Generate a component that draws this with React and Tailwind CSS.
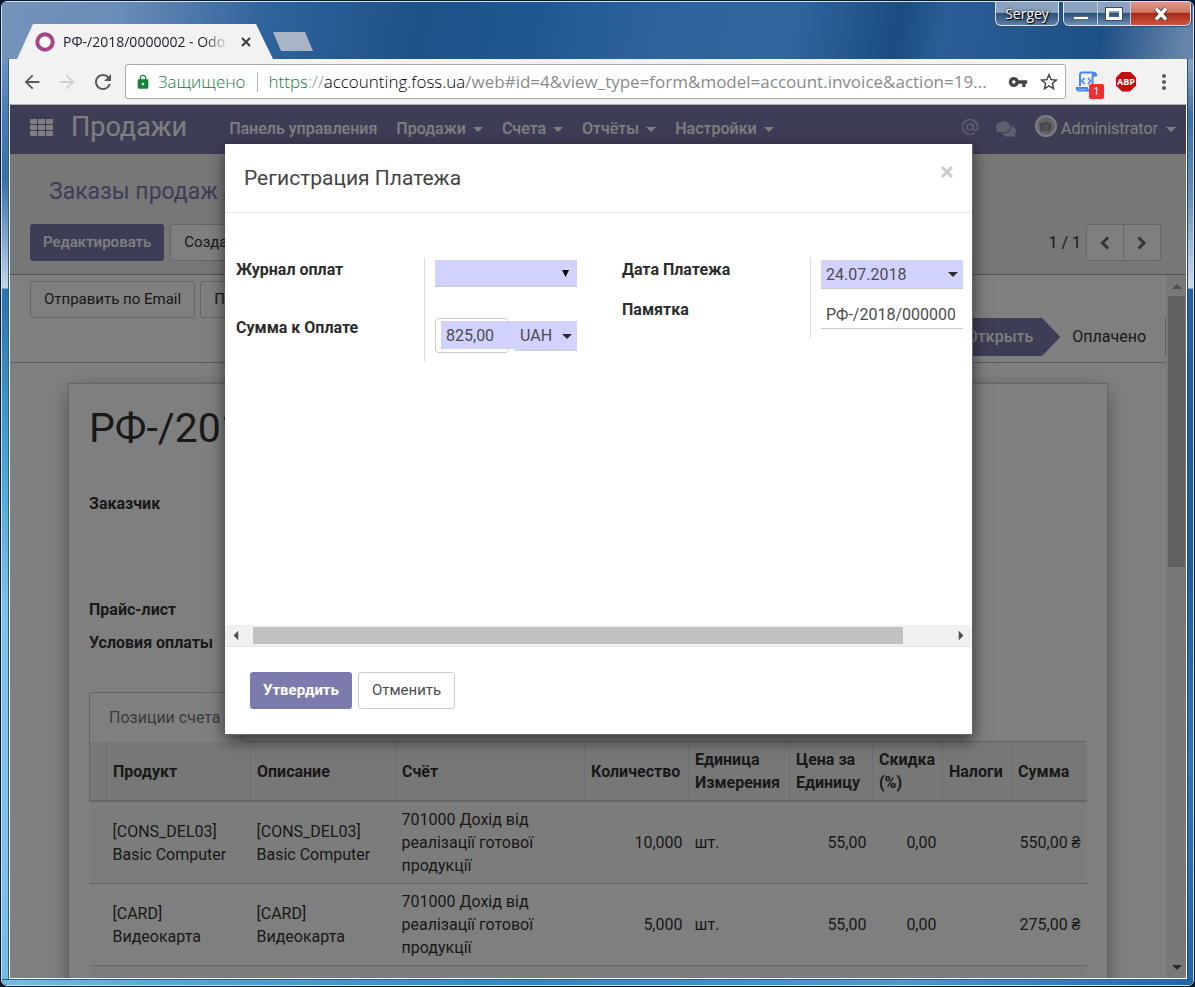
import React, { useState } from 'react';
import { MdArrowBack, MdArrowForward, MdRefresh, MdLock, MdVpnKey, MdStarBorder, MdMoreVert } from 'react-icons/md';
import { FaComments, FaCamera } from 'react-icons/fa';
import { AtSign } from 'lucide-react';

const menuItems = [
  { label: 'Панель управления', dropdown: false },
  { label: 'Продажи', dropdown: true },
  { label: 'Счета', dropdown: true },
  { label: 'Отчёты', dropdown: true },
  { label: 'Настройки', dropdown: true },
];

const invoiceLines = [
  {
    code: '[CONS_DEL03]',
    name: 'Basic Computer',
    account: '701000 Дохід від реалізації готової продукції',
    qty: '10,000',
    unit: 'шт.',
    price: '55,00',
    discount: '0,00',
    total: '550,00 ₴',
  },
  {
    code: '[CARD]',
    name: 'Видеокарта',
    account: '701000 Дохід від реалізації готової продукції',
    qty: '5,000',
    unit: 'шт.',
    price: '55,00',
    discount: '0,00',
    total: '275,00 ₴',
  },
];

function Caret({ className = '' }) {
  return (
    <svg viewBox="0 0 10 5" className={`h-[5px] w-[10px] fill-current ${className}`} aria-hidden="true">
      <path d="M0 0h10L5 5z" />
    </svg>
  );
}

function Chevron({ right }) {
  return (
    <svg viewBox="0 0 12 14" className="h-[14px] w-3" fill="none" stroke="currentColor" strokeWidth="3" aria-hidden="true">
      <path d={right ? 'M2.5 1.5 8 7l-5.5 5.5' : 'M9 1.5 3.5 7 9 12.5'} />
    </svg>
  );
}

function TitleBar() {
  return (
    <header className="flex h-[57px] shrink-0 items-end justify-between bg-[linear-gradient(100deg,#7593bb_0%,#6a8cb8_10%,#2f639c_22%,#1d5288_35%,#1e5790_44%,#2d639c_55%,#2f669e_66%,#1a4c81_75%,#2a5e96_79%,#1c4f86_92%,#6684aa_99%)] pl-[15px]">
      <div className="flex items-end">
        <div className="flex h-[35px] w-64 items-center gap-2 bg-[#f2f2f2] pl-[18px] [clip-path:polygon(16px_0,239px_0,100%_100%,0_100%)]">
          <svg viewBox="0 0 20 20" className="size-5 shrink-0" aria-hidden="true">
            <circle cx="10" cy="10" r="7.7" fill="#fff" stroke="#a24689" strokeWidth="4" />
          </svg>
          <span className="w-[167px] whitespace-nowrap font-['Open_Sans',sans-serif] text-sm text-[#1b1b2b] [mask-image:linear-gradient(to_right,#000_84%,transparent)]">
            РФ-/2018/0000002 - Odo
          </span>
          <button aria-label="Закрыть вкладку" className="flex size-4 items-center justify-center">
            <svg viewBox="0 0 10 10" className="size-[10px]" stroke="#3c3c3c" strokeWidth="2" aria-hidden="true">
              <path d="M1 1l8 8M9 1 1 9" />
            </svg>
          </button>
        </div>
        <button aria-label="Новая вкладка" className="mb-2 h-[19px] w-10 bg-[#a9b5c5] [clip-path:polygon(0_0,32px_0,100%_100%,8px_100%)]" />
      </div>
      <div className="flex h-6 gap-1 self-start pr-[2px]">
        <button className="h-6 w-16 rounded-b-md border border-t-0 border-[#dfe6ee] bg-[linear-gradient(#8ba3c0_45%,#2d5279_50%,#5b7ea6)] font-['Open_Sans',sans-serif] text-sm leading-6 text-white shadow-[0_0_0_1px_#2d4a6b] [text-shadow:0_0_3px_#000,1px_1px_1px_#000]">
          Sergey
        </button>
        <div className="flex h-6 overflow-hidden rounded-b-md border border-t-0 border-[#dfe6ee] shadow-[0_0_0_1px_#2d4a6b]">
          <button aria-label="Свернуть" className="flex w-[34px] items-center justify-center border-r border-[#c3cedb] bg-[linear-gradient(#8ba3c0_45%,#2d5279_50%,#6d8fb5)]">
            <svg viewBox="0 0 16 4" className="mt-2 h-1 w-4" aria-hidden="true">
              <rect x=".5" y=".5" width="15" height="3" fill="#fff" stroke="#3c4a5a" strokeWidth=".7" />
            </svg>
          </button>
          <button aria-label="Развернуть" className="flex w-[33px] items-center justify-center border-r border-[#c3cedb] bg-[linear-gradient(#8ba3c0_45%,#2d5279_50%,#6d8fb5)]">
            <svg viewBox="0 0 18 14" className="h-[14px] w-[18px]" fill="none" aria-hidden="true">
              <rect x="2" y="2" width="14" height="10" stroke="#3c4a5a" strokeWidth="4" />
              <rect x="2.5" y="2.5" width="13" height="9" stroke="#fff" strokeWidth="3" />
            </svg>
          </button>
          <button aria-label="Закрыть" className="flex w-[59px] items-center justify-center bg-[linear-gradient(#dc9a8c_0%,#cf7361_45%,#a92a17_50%,#c9543f)]">
            <svg viewBox="0 0 16 14" className="h-[14px] w-4" aria-hidden="true">
              <path d="M3 1.5 13 12.5M13 1.5 3 12.5" stroke="#4a2a2a" strokeWidth="5" />
              <path d="M3 1.5 13 12.5M13 1.5 3 12.5" stroke="#fff" strokeWidth="3.4" />
            </svg>
          </button>
        </div>
      </div>
    </header>
  );
}

function BrowserToolbar() {
  return (
    <div className="flex h-[46px] shrink-0 items-center border-b border-[#b0aeb2] bg-[#f2f2f2] pr-[10px] pl-[11px] text-[#5a5a5a]">
      <div className="flex items-center gap-[13px]">
        <button aria-label="Назад"><MdArrowBack size={22} /></button>
        <button aria-label="Вперёд" className="text-[#d0d0d0]"><MdArrowForward size={22} /></button>
        <button aria-label="Обновить"><MdRefresh size={24} /></button>
      </div>
      <div className="ml-[10px] flex h-[35px] min-w-0 flex-1 items-center rounded-[3px] border border-[#a9a9a9] bg-white pr-[5px] pl-[9px] font-['Open_Sans',sans-serif] text-[17px] font-light">
        <MdLock size={16} className="shrink-0 text-[#168039]" />
        <span className="ml-[7px] text-[#168039]">Защищено</span>
        <span className="mx-[11px] h-5 w-px shrink-0 bg-[#b5b5b5]" />
        <span className="min-w-0 flex-1 whitespace-nowrap text-[#8a8a8a]">
          <span className="text-[#168039]">https</span>://<span className="text-black">accounting.foss.ua</span>
          <span className="font-normal">/web#id=4&amp;view_type=form&amp;model=account.invoice&amp;action=19...</span>
        </span>
        <button aria-label="Пароли" className="ml-3"><MdVpnKey size={20} className="text-[#444]" /></button>
        <button aria-label="В закладки" className="ml-[10px]"><MdStarBorder size={22} className="text-[#444]" /></button>
      </div>
      <button aria-label="Скрипты" className="relative ml-[10px] h-7 w-7">
        <svg viewBox="0 0 22 22" className="size-[22px]" fill="none" stroke="#4285f4" strokeWidth="2" aria-hidden="true">
          <path d="M4 15V4c0-2 1-2.500 2-2.500h12" />
          <path d="M16.500 5v12c0 1.500-1 2.500-2.500 2.500H3c-1.500 0-2-1-2-2.500h10c0 1.500 1 2.500 2 2.500" />
          <path d="M16.500 5V3c0-2 4-2 4 0v2z" fill="#4285f4" strokeWidth="1" />
          <path d="M8.500 7 6 10l2.500 3M12 7l2.500 3-2.500 3" strokeWidth="1.600" />
        </svg>
        <span className="absolute right-0 bottom-[-3px] flex size-[15px] items-center justify-center rounded-[2px] bg-[#f03030] font-['Open_Sans',sans-serif] text-[11px] text-white">
          1
        </span>
      </button>
      <button aria-label="Adblock Plus" className="ml-3 size-5">
        <span className="flex size-5 items-center justify-center bg-[#c70d0b] font-['Open_Sans',sans-serif] text-[9px] font-bold text-white [clip-path:polygon(30%_0,70%_0,100%_30%,100%_70%,70%_100%,30%_100%,0_70%,0_30%)]">
          ABP
        </span>
      </button>
      <button aria-label="Меню" className="ml-4"><MdMoreVert size={24} /></button>
    </div>
  );
}

function NavBar() {
  return (
    <nav className="flex h-[49px] shrink-0 items-center bg-[#7c7bad] pr-[10px] pb-px pl-5 text-white">
      <button aria-label="Приложения" className="pb-1">
        <svg viewBox="0 0 23 17" className="h-[17px] w-[23px] fill-white" aria-hidden="true">
          {[0, 6, 12].map((y) =>
            [0, 8, 16].map((x) => <rect key={`${x}-${y}`} x={x} y={y} width="7" height="5" rx="1" />)
          )}
        </svg>
      </button>
      <span className="ml-[18px] pb-1 text-[27px] leading-8">Продажи</span>
      <ul className="ml-[42px] flex gap-[19px] font-medium">
        {menuItems.map((item) => (
          <li key={item.label}>
            <a href="#" className="flex items-center gap-[7px] whitespace-nowrap">
              {item.label}
              {item.dropdown && <Caret />}
            </a>
          </li>
        ))}
      </ul>
      <div className="ml-auto flex items-center">
        <button aria-label="Упоминания" className="pb-1 opacity-50"><AtSign size={18} strokeWidth={2} /></button>
        <button aria-label="Сообщения" className="ml-[17px] opacity-50"><FaComments size={20} /></button>
        <button className="ml-[19px] flex items-center">
          <span className="mb-[6px] flex size-[22px] items-center justify-center rounded-full border-2 border-white bg-[#c9c9d0]">
            <FaCamera size={11} className="text-[#8f8f98]" />
          </span>
          <span className="ml-1">Administrator</span>
          <Caret className="ml-2" />
        </button>
      </div>
    </nav>
  );
}

function ControlPanel() {
  return (
    <div className="flex h-[121px] shrink-0 flex-col justify-between border-b border-[#a5a3a5] bg-[#f0eeee] px-5 pt-[22px] pb-[13px]">
      <div className="pl-[19px] text-[23px] leading-8 whitespace-nowrap">
        <a href="#" className="text-[#7c7bad]">Заказы продаж</a>
        <span className="text-[#aaa]"> / </span>
      </div>
      <div className="flex items-center justify-between">
        <div className="flex gap-[6px]">
          <button className="h-[37px] rounded-[3px] bg-[#7c7bad] px-[13px] text-[15px] font-medium text-white">Редактировать</button>
          <button className="h-[37px] rounded-[3px] border border-[#ccc] bg-white px-[13px] text-[15px]">Создать</button>
        </div>
        <div className="flex items-center pr-[5px]">
          <span className="mr-[5px]">1 / 1</span>
          <button aria-label="Предыдущий" className="flex h-[37px] w-[38px] items-center justify-center rounded-l-[3px] border border-[#ccc] bg-white text-[#6a6a6a]">
            <Chevron />
          </button>
          <button aria-label="Следующий" className="flex h-[37px] w-[37px] items-center justify-center rounded-r-[3px] border border-l-0 border-[#ccc] bg-white text-[#6a6a6a]">
            <Chevron right />
          </button>
        </div>
      </div>
    </div>
  );
}

function StatusBar() {
  return (
    <div className="flex h-[88px] items-start justify-between border-b border-[#bbb] pt-[6px] pl-5">
      <div className="flex gap-[5px]">
        <button className="h-[37px] rounded-[3px] border border-[#ccc] px-[13px] text-[15px]">Отправить по Email</button>
        <button className="h-[37px] rounded-[3px] border border-[#ccc] px-[13px] text-[15px]">Печать</button>
      </div>
      <div className="mb-[6px] flex h-[38px] items-center self-end border-r border-[#bbb] pr-[19px]">
        <span className="flex h-full items-center bg-[#7c7bad] pr-[27px] pl-10 font-medium text-white [clip-path:polygon(0_0,calc(100%-18px)_0,100%_50%,calc(100%-18px)_100%,0_100%)]">
          Открыть
        </span>
        <span className="ml-3">Оплачено</span>
      </div>
    </div>
  );
}

function LinesTable() {
  const headCell = 'border-l border-[#ddd] px-[6px] text-left align-middle font-bold first:border-[#ccc]';
  const cell = 'px-[6px] py-[6px] align-middle';
  return (
    <table className="w-full table-fixed border-collapse leading-[23px]">
      <colgroup>
        <col className="w-[17px]" />
        <col className="w-[144px]" />
        <col className="w-[145px]" />
        <col className="w-[189px]" />
        <col className="w-[104px]" />
        <col className="w-[101px]" />
        <col className="w-[83px]" />
        <col className="w-[70px]" />
        <col className="w-[69px]" />
        <col className="w-[75px]" />
      </colgroup>
      <thead>
        <tr className="h-[59px] border-b-2 border-[#cacaca] bg-[#eee]">
          <th className={headCell} />
          <th className={headCell}>Продукт</th>
          <th className={headCell}>Описание</th>
          <th className={headCell}>Счёт</th>
          <th className={headCell}>Количество</th>
          <th className={headCell}>Единица Измерения</th>
          <th className={headCell}>Цена за Единицу</th>
          <th className={headCell}>Скидка (%)</th>
          <th className={headCell}>Налоги</th>
          <th className={headCell}>Сумма</th>
        </tr>
      </thead>
      <tbody>
        {invoiceLines.map((line) => (
          <tr key={line.code} className="h-[82px] border-b border-[#ccc] odd:bg-[#f9f9f9]">
            <td />
            <td className={cell}>{line.code}<br />{line.name}</td>
            <td className={cell}>{line.code}<br />{line.name}</td>
            <td className="py-[6px] pr-9 pl-[6px]">{line.account}</td>
            <td className={`${cell} text-right`}>{line.qty}</td>
            <td className={cell}>{line.unit}</td>
            <td className={`${cell} text-right`}>{line.price}</td>
            <td className={`${cell} text-right`}>{line.discount}</td>
            <td />
            <td className={`${cell} text-right whitespace-nowrap`}>{line.total}</td>
          </tr>
        ))}
        <tr className="h-[82px] bg-[#f9f9f9]"><td colSpan="10" /></tr>
      </tbody>
    </table>
  );
}

function InvoiceSheet() {
  return (
    <section className="mx-auto mt-5 w-full max-w-[1040px] border border-[#c8c8d3] bg-white pt-4 pr-[21px] pl-5 shadow-[0_5px_20px_-5px_rgba(0,0,0,0.6)]">
      <h1 className="text-[41px] leading-[56px]">РФ-/2018/0000002</h1>
      <dl className="mt-[36px] leading-[23px] font-bold">
        <dt>Заказчик</dt>
        <dt className="mt-[83px]">Прайс-лист</dt>
        <dt className="mt-[10px]">Условия оплаты</dt>
      </dl>
      <div className="mt-[38px] flex border-b border-[#ccc]">
        <button className="-mb-px h-[50px] w-[153px] rounded-t-[3px] border border-b-0 border-[#ccc] bg-white pl-[19px] text-left whitespace-nowrap text-[#777]">
          Позиции счета
        </button>
      </div>
      <LinesTable />
    </section>
  );
}

function PageScrollbar() {
  return (
    <div className="flex w-5 shrink-0 flex-col items-center bg-[#f0f0f0] pt-[9px] pb-2 pl-px">
      <Caret className="rotate-180 text-[#a0a0a0]" />
      <div className="mt-[7px] h-[271px] w-[17px] bg-[#c1c1c1]" />
      <Caret className="mt-auto text-[#505050]" />
    </div>
  );
}

function PaymentDialog({ onClose }) {
  const [amount, setAmount] = useState('825,00');
  const [date, setDate] = useState('24.07.2018');
  const [memo, setMemo] = useState('РФ-/2018/0000002');

  return (
    <div role="dialog" aria-labelledby="dialog-title" className="flex w-[748px] max-w-full flex-col border-r border-b border-[#666] bg-white text-[#4c4c4c] shadow-[0_5px_15px_rgba(0,0,0,0.6)]">
      <div className="flex h-[69px] items-start justify-between border-b border-[#e5e5e5] px-[19px] pt-[18px]">
        <h2 id="dialog-title" className="text-[21px] leading-8 text-[#444]">Регистрация Платежа</h2>
        <button aria-label="Закрыть" onClick={onClose} className="mt-1 text-[#ccc]">
          <svg viewBox="0 0 12 12" className="size-3" stroke="currentColor" strokeWidth="3" aria-hidden="true">
            <path d="M1 1l10 10M11 1 1 11" />
          </svg>
        </button>
      </div>

      <div className="grid h-[412px] grid-cols-2 content-start gap-[45px] pt-[45px] pr-[9px] pl-[11px]">
        <div className="grid grid-cols-[188px_1fr] self-start">
          <div className="flex flex-col gap-[35px] leading-[23px] font-bold text-[#2c2c2c]">
            <label htmlFor="journal">Журнал оплат</label>
            <label htmlFor="amount">Сумма к Оплате</label>
          </div>
          <div className="flex h-[104px] flex-col border-l border-[#ddd] pt-[2px] pl-[10px]">
            <div className="relative">
              <select id="journal" className="block h-[27px] w-full appearance-none border-b border-[#ccc] bg-[#d2d2ff] px-[5px]">
                <option value=""></option>
              </select>
              <svg viewBox="0 0 7 7" className="pointer-events-none absolute top-[10px] right-2 size-[7px] fill-black" aria-hidden="true">
                <path d="M0 0h7L3.500 7z" />
              </svg>
            </div>
            <div className="mt-[31px] flex h-[35px] items-start">
              <div className="h-[35px] w-[74px] rounded-[4px] border border-[#ccc] pt-[2px] pl-[5px]">
                <input id="amount" value={amount} onChange={(e) => setAmount(e.target.value)} className="block h-[28px] w-[74px] bg-[#d2d2ff] px-[5px]" />
              </div>
              <div className="relative mt-[3px] ml-[6px] w-[62px]">
                <select aria-label="Валюта" className="block h-[30px] w-full appearance-none border-b border-[#ccc] bg-[#d2d2ff] px-[5px]">
                  <option>UAH</option>
                </select>
                <Caret className="pointer-events-none absolute top-[13px] right-[5px] text-[#2c2c2c]" />
              </div>
            </div>
          </div>
        </div>

        <div className="grid grid-cols-[188px_1fr] self-start">
          <div className="flex flex-col gap-[17px] leading-[23px] font-bold text-[#2c2c2c]">
            <label htmlFor="date">Дата Платежа</label>
            <label htmlFor="memo">Памятка</label>
          </div>
          <div className="flex h-[80px] flex-col gap-[11px] border-l border-[#ddd] pt-[2px] pl-[10px]">
            <div className="relative">
              <input id="date" value={date} onChange={(e) => setDate(e.target.value)} className="block h-[29px] w-full border-b border-[#ccc] bg-[#d2d2ff] px-[5px]" />
              <Caret className="pointer-events-none absolute top-3 right-[5px] text-[#2c2c2c]" />
            </div>
            <input id="memo" value={memo} onChange={(e) => setMemo(e.target.value)} className="block h-[29px] w-full border-b border-[#ccc] pr-2 pl-[5px]" />
          </div>
        </div>
      </div>

      <div className="flex h-[22px] items-center border-b border-[#e5e5e5] bg-[#f0f0f0] px-[6px]">
        <Caret className="rotate-90 text-[#505050]" />
        <div className="ml-3 h-[17px] w-[650px] bg-[#c1c1c1]" />
        <Caret className="ml-auto -rotate-90 text-[#505050]" />
      </div>

      <div className="flex gap-[6px] px-[25px] py-[25px]">
        <button className="h-[37px] rounded-[3px] bg-[#7c7bad] px-[13px] text-[15px] font-bold text-white">Утвердить</button>
        <button onClick={onClose} className="h-[37px] rounded-[3px] border border-[#ccc] bg-white px-[13px] text-[15px]">Отменить</button>
      </div>
    </div>
  );
}

export default function App() {
  const [dialogOpen, setDialogOpen] = useState(true);

  return (
    <div className="flex h-screen flex-col overflow-hidden bg-[#0a1a2e] p-px font-['Roboto',sans-serif] text-base text-[#333]">
      <div className="flex min-h-0 flex-1 flex-col overflow-hidden rounded-md border border-[#c9e3f5]">
        <TitleBar />
        <div className="flex min-h-0 flex-1">
          <div className="w-[7px] shrink-0 border-r border-[#2b5f8f] bg-[linear-gradient(#6f92c0_0,#4a7ab5_60px,#3b6ea8_120px,#c3d6e8_229px,#2a72ad_230px,#4ba3d3_400px,#7fc4ea_560px,#83c0ea_800px,#74bce4)]" />
          <main className="flex min-w-0 flex-1 flex-col border-x border-b border-white bg-white">
            <BrowserToolbar />
            <div className="relative flex min-h-0 flex-1 flex-col overflow-hidden">
              <NavBar />
              <ControlPanel />
              <div className="flex min-h-0 flex-1">
                <div className="min-w-0 flex-1 overflow-hidden">
                  <StatusBar />
                  <InvoiceSheet />
                </div>
                <PageScrollbar />
              </div>
              {dialogOpen && (
                <div className="absolute inset-0 flex items-start justify-center bg-black/50 pt-[39px] pl-[2px]">
                  <PaymentDialog onClose={() => setDialogOpen(false)} />
                </div>
              )}
            </div>
          </main>
          <div className="w-[6px] shrink-0 border-l border-[#1b4a7c] bg-[linear-gradient(#8da4c2_0,#3f6fa6_60px,#6a8fbb_140px,#d0dbe8_229px,#2461a0_230px,#1e5ca0_500px,#2f75b8_700px,#1f66ad)]" />
        </div>
        <div className="h-[6px] shrink-0 border-t border-[#2b5f8f] bg-[linear-gradient(90deg,#74bce4,#4aa0d0_20%,#3187c2_45%,#4f98cf_75%,#1f66ad)]" />
      </div>
    </div>
  );
}
